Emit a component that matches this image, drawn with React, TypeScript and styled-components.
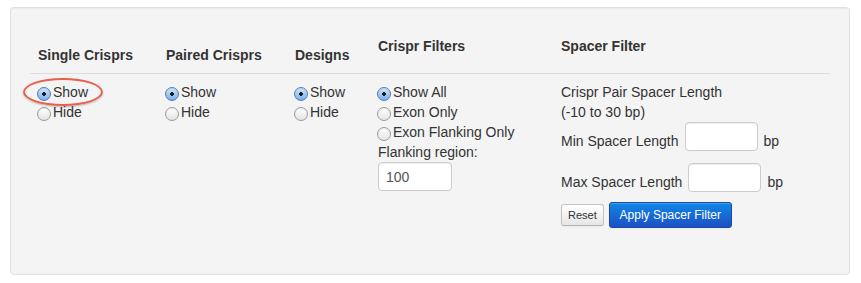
import React from "react";
import styled, { createGlobalStyle } from "styled-components";

const GlobalStyle = createGlobalStyle`
  html, body {
    margin: 0;
    padding: 0;
    background: #ffffff;
  }
  body {
    font-family: "Liberation Sans", Arial, Helvetica, sans-serif;
    font-size: 14px;
    line-height: 20px;
    color: #333333;
  }
`;

type RadioOption = { label: string; checked?: boolean; marked?: boolean };

const singleOptions: RadioOption[] = [
  { label: "Show", checked: true, marked: true },
  { label: "Hide" },
];
const showHide: RadioOption[] = [{ label: "Show", checked: true }, { label: "Hide" }];
const crisprFilters: RadioOption[] = [
  { label: "Show All", checked: true },
  { label: "Exon Only" },
  { label: "Exon Flanking Only" },
];

const RadioGroup = ({ name, options }: { name: string; options: RadioOption[] }) => (
  <>
    {options.map((o) => (
      <OptionLabel key={o.label}>
        <Radio type="radio" name={name} defaultChecked={o.checked} />
        {o.label}
        {o.marked && <Marker />}
      </OptionLabel>
    ))}
  </>
);

export default function App() {
  return (
    <Page>
      <GlobalStyle />
      <Well>
        <Table>
          <colgroup>
            <col style={{ width: 128 }} />
            <col style={{ width: 129 }} />
            <col style={{ width: 83 }} />
            <col style={{ width: 183 }} />
            <col />
          </colgroup>
          <thead>
            <tr>
              <Head>Single Crisprs</Head>
              <Head>Paired Crisprs</Head>
              <Head>Designs</Head>
              <Head $raised>Crispr Filters</Head>
              <Head $raised>Spacer Filter</Head>
            </tr>
          </thead>
          <tbody>
            <tr>
              <Cell>
                <RadioGroup name="single" options={singleOptions} />
              </Cell>
              <Cell>
                <RadioGroup name="paired" options={showHide} />
              </Cell>
              <Cell>
                <RadioGroup name="designs" options={showHide} />
              </Cell>
              <Cell>
                <RadioGroup name="filters" options={crisprFilters} />
                <Line>Flanking region:</Line>
                <NumberInput type="text" defaultValue="100" />
              </Cell>
              <Cell>
                <Line>Crispr Pair Spacer Length</Line>
                <Line>(-10 to 30 bp)</Line>
                <SpacerRow>
                  <span>Min Spacer Length</span>
                  <SpacerInput type="text" />
                  <span>bp</span>
                </SpacerRow>
                <SpacerRow>
                  <span>Max Spacer Length</span>
                  <SpacerInput type="text" />
                  <span>bp</span>
                </SpacerRow>
                <Buttons>
                  <ResetButton type="button">Reset</ResetButton>
                  <ApplyButton type="button">Apply Spacer Filter</ApplyButton>
                </Buttons>
              </Cell>
            </tr>
          </tbody>
        </Table>
      </Well>
    </Page>
  );
}

const Page = styled.div`
  padding: 7px 11px 8px 10px;
`;

const Well = styled.div`
  height: 268px;
  box-sizing: border-box;
  padding: 21px 19px 19px 19px;
  background: #f4f4f4;
  border: 1px solid #e0e0e0;
  border-radius: 4px;
  box-shadow: inset 0 1px 1px rgba(0, 0, 0, 0.04);
`;

const Table = styled.table`
  width: 800px;
  border-collapse: collapse;
  border-spacing: 0;
  table-layout: fixed;
`;

const Head = styled.th<{ $raised?: boolean }>`
  text-align: left;
  vertical-align: top;
  font-weight: bold;
  font-size: 14px;
  line-height: 20px;
  color: #333333;
  padding: ${(p) => (p.$raised ? "7px 8px 17px" : "16px 8px 8px")};
  border-bottom: 1px solid #dddddd;
`;

const Cell = styled.td`
  vertical-align: top;
  padding: 8px;
  line-height: 20px;
`;

const OptionLabel = styled.label`
  position: relative;
  display: block;
  line-height: 20px;
  white-space: nowrap;
`;

const Radio = styled.input`
  appearance: none;
  -webkit-appearance: none;
  width: 14px;
  height: 14px;
  margin: 0 2px 0 -1px;
  vertical-align: -4px;
  border-radius: 50%;
  border: 1px solid #9a9a9a;
  background: linear-gradient(#ffffff, #e4e4e4);
  box-shadow: inset 0 1px 1px rgba(0, 0, 0, 0.08);

  &:checked {
    border-color: #5a7eae;
    background: radial-gradient(circle at 50% 50%, #1b1b1b 0 1.6px, transparent 2.1px),
      linear-gradient(#d3e7fc, #78aeed);
  }
`;

const Marker = styled.span`
  position: absolute;
  left: -15px;
  top: -4px;
  width: 76px;
  height: 24px;
  border: 2.5px solid #e8604c;
  border-radius: 50%;
  box-shadow: 0 1px 2px rgba(0, 0, 0, 0.25);
  pointer-events: none;
`;

const Line = styled.div`
  line-height: 20px;
  white-space: nowrap;
`;

const TextInput = styled.input`
  box-sizing: border-box;
  height: 29px;
  margin: 0;
  padding: 4px 7px;
  font-family: "Liberation Sans", Arial, sans-serif;
  font-size: 14px;
  color: #555555;
  background: #ffffff;
  border: 1px solid #cccccc;
  border-radius: 4px;
  box-shadow: inset 0 1px 1px rgba(0, 0, 0, 0.075);
`;

const NumberInput = styled(TextInput)`
  display: block;
  width: 74px;
`;

const SpacerInput = styled(TextInput)`
  width: 73px;
`;

const SpacerRow = styled.div`
  display: flex;
  align-items: center;
  gap: 6px;
  height: 29px;
  white-space: nowrap;
  margin-bottom: 12px;

  & > span {
    position: relative;
    top: 4px;
  }
`;

const Buttons = styled.div`
  display: flex;
  align-items: center;
  gap: 5px;
  margin-top: -2px;
`;

const ResetButton = styled.button`
  height: 22px;
  padding: 0 6px;
  font-family: "Liberation Sans", Arial, sans-serif;
  font-size: 11px;
  color: #333333;
  background: linear-gradient(#ffffff, #e6e6e6);
  border: 1px solid #c5c5c5;
  border-bottom-color: #b3b3b3;
  border-radius: 3px;
  box-shadow: inset 0 1px 0 rgba(255, 255, 255, 0.2), 0 1px 2px rgba(0, 0, 0, 0.05);
`;

const ApplyButton = styled.button`
  width: 123px;
  height: 26px;
  padding: 0;
  font-family: "Liberation Sans", Arial, sans-serif;
  font-size: 12px;
  color: #ffffff;
  background: linear-gradient(#0f88e6, #1d4fc4);
  border: 1px solid #1a4aa8;
  border-radius: 3px;
  box-shadow: inset 0 1px 0 rgba(255, 255, 255, 0.2), 0 1px 2px rgba(0, 0, 0, 0.05);
`;
